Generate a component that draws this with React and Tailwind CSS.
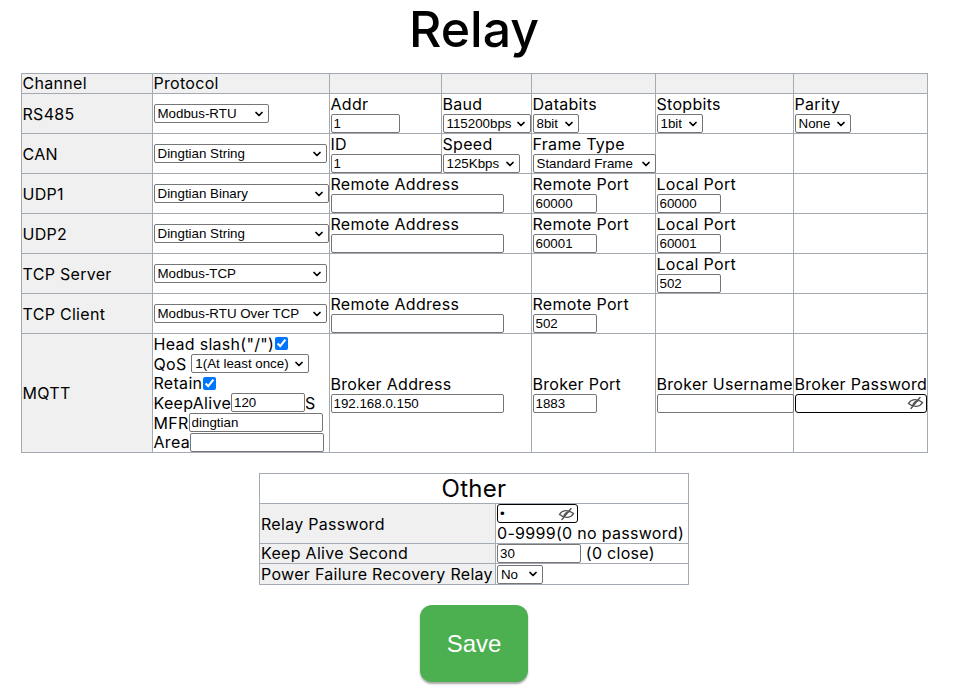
import React from 'react';
import { ChevronDown } from 'lucide-react';

// shared cell look for both tables
const cell = "border border-[#a3aab2] px-px py-0 align-middle whitespace-nowrap";
const grayCell = "border border-[#a3aab2] px-px py-0 align-middle whitespace-nowrap bg-[#f0f0f0]";

const ctl = "font-['Liberation_Sans',Arial,sans-serif] tracking-normal text-[13.33px] leading-[17px] text-black h-[19px] border border-[#767676] rounded-[2px] bg-white outline-none";

const TextBox = ({ w, value = "" }) => (
    <input type="text" defaultValue={value} className={`${ctl} ${w} px-0.5 block`} />
);

const Sel = ({ w, value }) => (
    <span className={`relative flex shrink-0 h-[19px] ${w}`}>
        <select defaultValue={value} className={`${ctl} block w-full appearance-none pl-[3px] pr-4`}>
            <option>{value}</option>
        </select>
        <ChevronDown size={12} strokeWidth={3.5} className="absolute right-[4px] top-1/2 -translate-y-1/2 pointer-events-none text-black" />
    </span>
);

const EyeSlash = () => (
    <svg width="17" height="13" viewBox="0 0 17 13" fill="none" stroke="#555" strokeWidth="1.4" strokeLinecap="round">
        <path d="M1.5 7 C4 2.5 10 1.5 15.5 6 C13 10.5 7 11.5 1.5 7 Z" />
        <path d="M5.5 9.5 C6.5 6 9 4.5 11.5 4" />
        <path d="M4 12 L13 1" />
    </svg>
);

const PassBox = ({ w, value = "" }) => (
    <span className={`relative flex shrink-0 h-[19px] ${w}`}>
        <input type="password" defaultValue={value} className={`${ctl} block w-full border-black rounded-[3px] pl-0.5 pr-5`} />
        <span className="absolute right-[3px] top-1/2 -translate-y-1/2 pointer-events-none flex">
            <EyeSlash />
        </span>
    </span>
);

const Check = () => (
    <input type="checkbox" defaultChecked className="accent-[#0075ff] w-[13px] h-[13px] m-0 ml-px" />
);

const Field = ({ label, children }) => (
    <div className="flex flex-col items-start">
        <div className="leading-5">{label}</div>
        <div className="flex h-[19px]">{children}</div>
    </div>
);

const Line = ({ children }) => <div className="flex items-center h-[19.7px]">{children}</div>;

export default function App() {
    return (
        <div className="w-[948px] min-h-screen bg-white text-black font-['Inter',sans-serif] text-[16px] tracking-[0.3px] flex flex-col items-center">
            <h1 className="text-[50px] leading-[56px] font-medium tracking-normal mt-px">Relay</h1>

            {/* Channel table */}
            <table className="mt-[16px] border-collapse table-fixed w-[907px]">
                <colgroup>
                    <col className="w-[131px]" />
                    <col className="w-[177px]" />
                    <col className="w-[112px]" />
                    <col className="w-[90px]" />
                    <col className="w-[124px]" />
                    <col className="w-[138px]" />
                    <col className="w-[134px]" />
                </colgroup>
                <tbody>
                    <tr className="leading-[19px]">
                        <td className={grayCell}>Channel</td>
                        <td className={grayCell}>Protocol</td>
                        <td className={grayCell}></td>
                        <td className={grayCell}></td>
                        <td className={grayCell}></td>
                        <td className={grayCell}></td>
                        <td className={grayCell}></td>
                    </tr>
                    <tr>
                        <td className={grayCell}>RS485</td>
                        <td className={cell}><Sel w="w-[115px]" value="Modbus-RTU" /></td>
                        <td className={cell}><Field label="Addr"><TextBox w="w-[69px]" value="1" /></Field></td>
                        <td className={cell}><Field label="Baud"><Sel w="w-[88px]" value="115200bps" /></Field></td>
                        <td className={cell}><Field label="Databits"><Sel w="w-[46px]" value="8bit" /></Field></td>
                        <td className={cell}><Field label="Stopbits"><Sel w="w-[46px]" value="1bit" /></Field></td>
                        <td className={cell}><Field label="Parity"><Sel w="w-[56px]" value="None" /></Field></td>
                    </tr>
                    <tr>
                        <td className={grayCell}>CAN</td>
                        <td className={cell}><Sel w="w-[173px]" value="Dingtian String" /></td>
                        <td className={cell}><Field label="ID"><TextBox w="w-[111px]" value="1" /></Field></td>
                        <td className={cell}><Field label="Speed"><Sel w="w-[77px]" value="125Kbps" /></Field></td>
                        <td className={cell}><Field label="Frame Type"><Sel w="w-[123px]" value="Standard Frame" /></Field></td>
                        <td className={cell}></td>
                        <td className={cell}></td>
                    </tr>
                    <tr>
                        <td className={grayCell}>UDP1</td>
                        <td className={cell}><Sel w="w-[175px]" value="Dingtian Binary" /></td>
                        <td className={cell} colSpan={2}><Field label="Remote Address"><TextBox w="w-[173px]" /></Field></td>
                        <td className={cell}><Field label="Remote Port"><TextBox w="w-[64px]" value="60000" /></Field></td>
                        <td className={cell}><Field label="Local Port"><TextBox w="w-[64px]" value="60000" /></Field></td>
                        <td className={cell}></td>
                    </tr>
                    <tr>
                        <td className={grayCell}>UDP2</td>
                        <td className={cell}><Sel w="w-[175px]" value="Dingtian String" /></td>
                        <td className={cell} colSpan={2}><Field label="Remote Address"><TextBox w="w-[173px]" /></Field></td>
                        <td className={cell}><Field label="Remote Port"><TextBox w="w-[64px]" value="60001" /></Field></td>
                        <td className={cell}><Field label="Local Port"><TextBox w="w-[64px]" value="60001" /></Field></td>
                        <td className={cell}></td>
                    </tr>
                    <tr>
                        <td className={grayCell}>TCP Server</td>
                        <td className={cell}><Sel w="w-[173px]" value="Modbus-TCP" /></td>
                        <td className={cell} colSpan={2}></td>
                        <td className={cell}></td>
                        <td className={cell}><Field label="Local Port"><TextBox w="w-[64px]" value="502" /></Field></td>
                        <td className={cell}></td>
                    </tr>
                    <tr>
                        <td className={grayCell}>TCP Client</td>
                        <td className={cell}><Sel w="w-[173px]" value="Modbus-RTU Over TCP" /></td>
                        <td className={cell} colSpan={2}><Field label="Remote Address"><TextBox w="w-[173px]" /></Field></td>
                        <td className={cell}><Field label="Remote Port"><TextBox w="w-[64px]" value="502" /></Field></td>
                        <td className={cell}></td>
                        <td className={cell}></td>
                    </tr>
                    <tr>
                        <td className={grayCell}>MQTT</td>
                        <td className={cell}>
                            <Line>Head slash("/")<Check /></Line>
                            <Line>QoS&nbsp;<Sel w="w-[118px]" value="1(At least once)" /></Line>
                            <Line>Retain<Check /></Line>
                            <Line>KeepAlive<TextBox w="w-[74px]" value="120" />S</Line>
                            <Line>MFR<TextBox w="w-[134px]" value="dingtian" /></Line>
                            <Line>Area<TextBox w="w-[134px]" /></Line>
                        </td>
                        <td className={cell} colSpan={2}><Field label="Broker Address"><TextBox w="w-[173px]" value="192.168.0.150" /></Field></td>
                        <td className={cell}><Field label="Broker Port"><TextBox w="w-[64px]" value="1883" /></Field></td>
                        <td className={cell}><Field label="Broker Username"><TextBox w="w-[137px]" /></Field></td>
                        <td className={cell}><Field label="Broker Password"><PassBox w="w-[132px]" /></Field></td>
                    </tr>
                </tbody>
            </table>

            {/* Other settings */}
            <table className="mt-[20px] border-collapse table-fixed w-[429px]">
                <colgroup>
                    <col className="w-[236px]" />
                    <col className="w-[193px]" />
                </colgroup>
                <tbody>
                    <tr>
                        <td className={`${cell} text-center text-[24px] leading-[29px]`} colSpan={2}>Other</td>
                    </tr>
                    <tr>
                        <td className={grayCell}>Relay Password</td>
                        <td className={cell}>
                            <div className="flex h-[19px]"><PassBox w="w-[81px]" value="1" /></div>
                            <div className="leading-5">0-9999(0 no password)</div>
                        </td>
                    </tr>
                    <tr>
                        <td className={`${grayCell} leading-[19px]`}>Keep Alive Second</td>
                        <td className={`${cell} leading-[19px]`}>
                            <div className="flex items-center"><TextBox w="w-[84px]" value="30" /><span>&nbsp;(0 close)</span></div>
                        </td>
                    </tr>
                    <tr>
                        <td className={`${grayCell} leading-5`}>Power Failure Recovery Relay</td>
                        <td className={`${cell} leading-5`}>
                            <div className="flex items-center"><Sel w="w-[46px]" value="No" /></div>
                        </td>
                    </tr>
                </tbody>
            </table>

            <button className="mt-[20px] w-[108px] h-[77px] rounded-[12px] bg-[#4caf50] text-white text-[24px] tracking-normal font-['Liberation_Sans',Arial,sans-serif] shadow-[0_2px_2px_rgba(0,0,0,0.35)]">
                Save
            </button>
        </div>
    );
}
